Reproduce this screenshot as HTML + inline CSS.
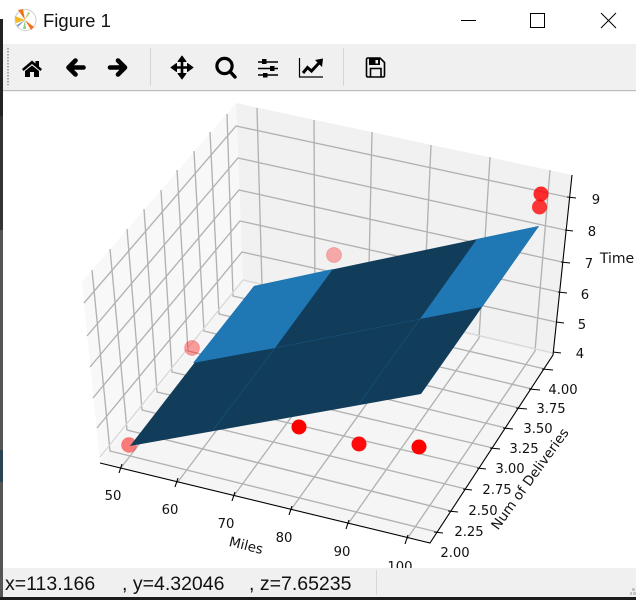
<!DOCTYPE html>
<html><head><meta charset="utf-8"><style>
html,body{margin:0;padding:0;background:#fff;width:636px;height:600px;overflow:hidden}
svg{display:block;position:absolute;left:0;top:0}
.t{font-family:"DejaVu Sans",sans-serif;font-size:13.2px;fill:#111;text-anchor:middle}
.u{font-family:"Liberation Sans","Noto Sans CJK SC",sans-serif;fill:#111}
</style></head><body>
<svg width="636" height="600" viewBox="0 0 636 600" xmlns="http://www.w3.org/2000/svg">
<rect width="636" height="600" fill="#fff"/>
<!-- left background strip -->
<rect x="0" y="19" width="3" height="100" fill="#222"/>
<rect x="0" y="116" width="3" height="114" fill="#333"/>
<rect x="0" y="230" width="3" height="220" fill="#555"/>
<rect x="0" y="450" width="3" height="32" fill="#2c4354"/>
<rect x="0" y="482" width="3" height="115" fill="#555"/>
<!-- title bar -->
<circle cx="25.5" cy="20" r="10.5" fill="#fff" stroke="#ccc" stroke-width="1"/>
<path d="M25,20 L18,10 L23,9Z" fill="#f0741c"/>
<path d="M25,20 L15,16 L16,23Z" fill="#f5b81e"/>
<path d="M25,20 L34,27 L31,30Z" fill="#f0741c"/>
<path d="M25,20 L30,13 L28,12Z" fill="#a9d05a"/>
<path d="M25,20 L26,29 L23,29Z" fill="#8ed081"/>
<path d="M25,20 L18,27 L17,25Z" fill="#7a9cc0"/>
<text x="43" y="27" class="u" style="font-size:18.5px;fill:#111">Figure 1</text>
<line x1="461" y1="20.5" x2="476" y2="20.5" stroke="#000" stroke-width="1"/>
<rect x="530.5" y="13.5" width="14" height="14" fill="none" stroke="#000" stroke-width="1"/>
<path d="M601,13 L616,28 M616,13 L601,28" stroke="#000" stroke-width="1" fill="none"/>
<!-- toolbar -->
<rect x="3" y="44" width="633" height="46" fill="#f0f0f0"/>
<rect x="3" y="90" width="633" height="1.2" fill="#bcbcbc"/>
<path d="M8,48V85" stroke="#aaa" stroke-width="2" stroke-dasharray="1.5 1.5" fill="none"/>
<rect x="150" y="48" width="1" height="38" fill="#d4d4d4"/>
<rect x="343" y="48" width="1" height="38" fill="#d4d4d4"/>
<!-- home -->
<path d="M22,69 L32,60.5 L35.5,63.5 V61 H39 V66.5 L42,69 L40.5,71 L32,64 L23.5,71Z" fill="#000"/>
<path d="M25,71 L32,65.5 L39,71 V77 H34 V72 H30 V77 H25Z" fill="#000"/>
<!-- back / forward -->
<path d="M69,67.5 H83.5 M75.5,60.5 L68.5,67.5 L75.5,74.5" fill="none" stroke="#000" stroke-width="4.6" stroke-linecap="round" stroke-linejoin="round"/>
<path d="M110,67.5 H124.5 M118,60.5 L125,67.5 L118,74.5" fill="none" stroke="#000" stroke-width="4.6" stroke-linecap="round" stroke-linejoin="round"/>
<!-- move -->
<path d="M182,60 V76 M174,67.5 H190" stroke="#000" stroke-width="2.6" fill="none"/>
<path d="M182,56 L186,61.5 H178Z M182,79 L186,73.5 H178Z M171,67.5 L176.5,63.5 V71.5Z M193,67.5 L187.5,63.5 V71.5Z" fill="#000" stroke="#000" stroke-linejoin="round"/>
<!-- zoom -->
<circle cx="224.5" cy="66" r="7.6" fill="none" stroke="#000" stroke-width="3.2"/>
<path d="M230,71.5 L235,77" stroke="#000" stroke-width="3.4" stroke-linecap="round"/>
<!-- sliders -->
<path d="M258,62 H278 M258,68.5 H278 M258,75 H278" stroke="#000" stroke-width="1.5"/>
<rect x="262" y="59" width="4.5" height="5" fill="#000"/>
<rect x="270" y="66" width="4.5" height="5" fill="#000"/>
<rect x="263" y="73" width="4.5" height="4.5" fill="#000"/>
<!-- chart -->
<path d="M299.5,58 V77 H323" fill="none" stroke="#000" stroke-width="1.2"/>
<path d="M303,73 L307.5,67.5 L311.5,71 L319,63" fill="none" stroke="#000" stroke-width="3"/>
<path d="M315,60 L323,58.5 L322,67Z" fill="#000"/>
<!-- save -->
<path d="M366.5,59.5 Q366.5,58 368,58 H380 L384.5,62.5 V75.5 Q384.5,77 383,77 H368 Q366.5,77 366.5,75.5Z" fill="none" stroke="#000" stroke-width="1.6"/>
<path d="M369,58.5 H380 V65 H369Z" fill="#000"/>
<rect x="375.5" y="60" width="2.5" height="3.5" fill="#f0f0f0"/>
<path d="M370.5,77 V68.5 H381 V77" fill="none" stroke="#000" stroke-width="1.6"/>

<!-- panes -->
<polygon points="82,282 236,103 243,281 100,463" fill="#f8f8f8"/>
<polygon points="236,103 572,175 553,355 243,281" fill="#f1f1f1"/>
<polygon points="100,463 243,281 553,355 430,543" fill="#f5f5f5"/>
<!-- gridlines -->
<g stroke="#b2b2b2" stroke-width="1.35" fill="none">
<!-- back wall verticals + floor x lines -->
<path d="M257,108 L262,285 L120,469"/>
<path d="M314,120 L315,299 L177,483"/>
<path d="M372,132 L368,312 L233,497"/>
<path d="M431,145 L423,325 L290,511"/>
<path d="M490,157 L479,338 L348,524"/>
<path d="M550,170 L535,351 L407,539"/>
<!-- left wall verticals + floor y lines -->
<path d="M92,270 L110,451 L437,532"/>
<path d="M110,249 L127,430 L451,511"/>
<path d="M127,229 L142,410 L466,489"/>
<path d="M144,209 L157,392 L480,468"/>
<path d="M161,190 L172,372 L493,448"/>
<path d="M177,170 L188,351 L506,428"/>
<path d="M194,151 L204,331 L519,408"/>
<path d="M210,132 L219,314 L532,389"/>
<path d="M227,114 L233,296 L545,369"/>
<!-- z lines -->
<path d="M84,303 L236,126 L567,197"/>
<path d="M87,336 L238,158 L565,230"/>
<path d="M90,367 L239,190 L562,262"/>
<path d="M93,398 L240,221 L559,292"/>
<path d="M97,428 L242,252 L556,322"/>
<path d="M100,457 L243,280 L553,353" stroke="#d8d8d8"/>
</g>
<!-- behind surface points -->
<circle cx="334" cy="255" r="7.5" fill="#ff0000" fill-opacity="0.3" stroke="#ff0000" stroke-opacity="0.2"/>
<circle cx="192" cy="348" r="7.5" fill="#ff0000" fill-opacity="0.36" stroke="#ff0000" stroke-opacity="0.2"/>
<circle cx="129" cy="445" r="7.5" fill="#ff0000" fill-opacity="0.5" stroke="#ff0000" stroke-opacity="0.2"/>
<circle cx="299" cy="427" r="7.5" fill="#ff0000" fill-opacity="1"/>
<circle cx="359" cy="444" r="7.5" fill="#ff0000" fill-opacity="0.95"/>
<circle cx="419" cy="447" r="7.5" fill="#ff0000"/>
<circle cx="539.5" cy="207" r="7.5" fill="#ff0000" fill-opacity="0.78"/>
<circle cx="541" cy="194" r="7.5" fill="#ff0000" fill-opacity="0.82"/>
<!-- surface -->
<polygon points="130,446 254,286 539,226 421,394" fill="#113c5a"/>
<polygon points="254,286 333,269 275,348 193,363" fill="#1f77b4"/>
<polygon points="477,239 539,226 482,307 420,319" fill="#1f77b4"/>
<path d="M275,348 L420,319 M275,348 L213,430 M420,319 L358,405" stroke="#1f77b4" stroke-opacity="0.35" stroke-width="0.7" fill="none"/>
<!-- axes -->
<path d="M100,463 L430,543 L553,355 L572,175" fill="none" stroke="#000" stroke-width="1.1"/>
<g stroke="#000" stroke-width="1.1" fill="none">
<path d="M122,464 L119,473 M178,478 L175,487 M235,492 L232,501 M292,506 L289,515 M349,520 L346,529 M408,535 L405,544"/>
<path d="M434,532 L443,533 M448,511 L458,512 M463,489 L472,490 M477,468 L486,469 M490,448 L500,449 M503,428 L513,429 M516,408 L527,409 M529,389 L540,390 M542,369 L553,370"/>
<path d="M567,197 L576,198 M565,230 L573,231 M561,262 L570,263 M558,292 L567,293 M556,322 L564,323 M553,352 L561,353"/>
</g>
<!-- tick labels -->
<g class="t">
<text x="113" y="500">50</text><text x="170" y="514">60</text><text x="226" y="528">70</text><text x="284" y="542">80</text><text x="342" y="556">90</text><text x="400" y="571">100</text>
<text x="455" y="557">2.00</text><text x="469" y="536">2.25</text><text x="483" y="515">2.50</text><text x="497" y="494">2.75</text><text x="510" y="473">3.00</text><text x="524" y="453">3.25</text><text x="538" y="433">3.50</text><text x="551" y="413">3.75</text><text x="563" y="394">4.00</text>
<text x="596" y="204">9</text><text x="592" y="236">8</text><text x="589" y="268">7</text><text x="585" y="299">6</text><text x="582" y="329">5</text><text x="580" y="358">4</text>
<text x="617" y="263" style="font-size:14px">Time</text>
<text transform="translate(246,546) rotate(14) translate(0,4)" style="font-size:13.5px">Miles</text>
<text transform="translate(530,479) rotate(-54) translate(0,4.5)" style="font-size:13.6px">Num of Deliveries</text>
</g>
<!-- status bar -->
<rect x="3" y="568" width="633" height="29" fill="#f0f0f0"/>
<rect x="376" y="570" width="1" height="25" fill="#d8d8d8"/>
<rect x="632" y="588" width="3" height="3" fill="#c4c4c4"/><rect x="630" y="592" width="2" height="3" fill="#c4c4c4"/><rect x="633" y="592" width="3" height="3" fill="#c4c4c4"/>
<rect x="0" y="597" width="636" height="3" fill="#1c1c1c"/>
<g class="u" style="font-size:19.5px">
<text x="5" y="590">x=113.166</text><text x="122" y="590">, y=4.32046</text><text x="249" y="590">, z=7.65235</text>
</g>
</svg>
</body></html>
